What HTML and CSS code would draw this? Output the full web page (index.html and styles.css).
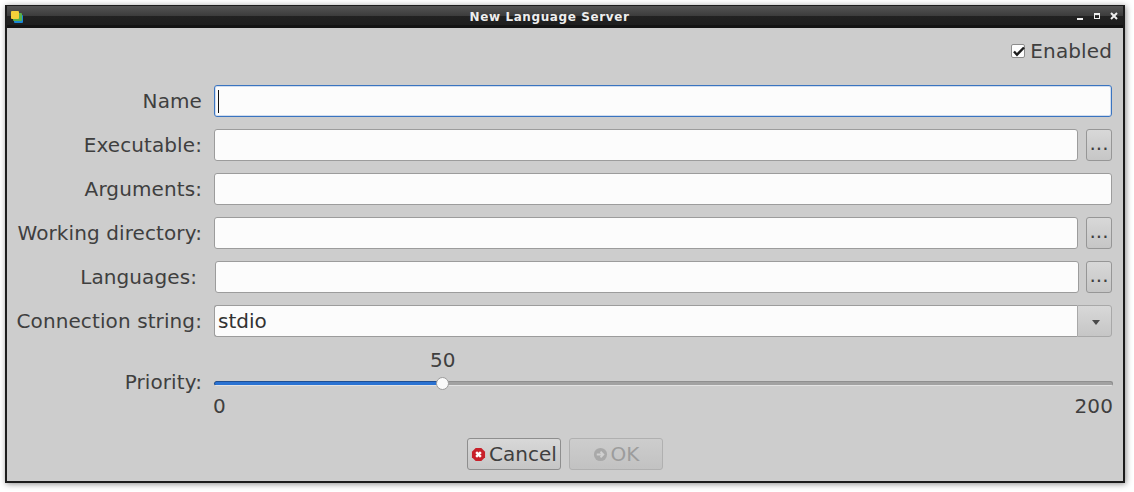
FILE: index.html
```html
<!DOCTYPE html>
<html lang="en">
<head>
<meta charset="utf-8">
<title>New Language Server</title>
<link rel="stylesheet" href="styles.css">
</head>
<body>
<div class="window">
  <header class="titlebar">
    <div class="title-left">
      <svg class="app-icon" width="13" height="13" viewBox="0 0 13 13">
        <rect x="3" y="4" width="9" height="8" rx="1" fill="#1b87d6"/>
        <rect x="2" y="2" width="9" height="8" rx="1" fill="#58b04a"/>
        <rect x="0" y="0" width="8" height="8" rx="1" fill="#f5cf3a"/>
      </svg>
    </div>
    <div class="title-text">New Language Server</div>
    <div class="title-controls">
      <svg width="8" height="8" viewBox="0 0 8 8"><rect x="1" y="6" width="6" height="2" fill="#eee"/></svg>
      <svg width="8" height="8" viewBox="0 0 8 8"><path d="M1 1h6v6H1z M2 3v3h4V3z" fill="#eee" fill-rule="evenodd"/></svg>
      <svg width="8" height="8" viewBox="0 0 8 8"><path d="M1 1l6 6M7 1L1 7" stroke="#eee" stroke-width="2"/></svg>
    </div>
  </header>
  <main class="content">
    <div class="enabled-row">
      <span class="checkbox">
        <svg width="15" height="15" viewBox="0 0 15 15"><path d="M3 7.5l3 3.2L13 3.5" fill="none" stroke="#1c1c1c" stroke-width="2.4"/></svg>
      </span>
      <span class="enabled-text">Enabled</span>
    </div>
    <div class="form">
      <label class="label">Name</label>
      <div class="field-row"><div class="input focused"><span class="caret"></span></div></div>

      <label class="label">Executable:</label>
      <div class="field-row"><div class="input"></div><button class="browse">...</button></div>

      <label class="label">Arguments:</label>
      <div class="field-row"><div class="input"></div></div>

      <label class="label">Working directory:</label>
      <div class="field-row"><div class="input"></div><button class="browse">...</button></div>

      <label class="label lang-label">Languages:</label>
      <div class="field-row lang-row"><div class="input"></div><button class="browse">...</button></div>

      <label class="label">Connection string:</label>
      <div class="field-row combo">
        <div class="input combo-input">stdio</div>
        <div class="combo-arrow"><svg width="8" height="5" viewBox="0 0 8 5"><path d="M0 0h8L4 5z" fill="#4a4a4a"/></svg></div>
      </div>

      <label class="label priority-label">Priority:</label>
      <div class="slider">
        <div class="slider-value">50</div>
        <div class="track"><div class="fill"></div><div class="thumb"></div></div>
        <div class="slider-ends"><span>0</span><span>200</span></div>
      </div>
    </div>
    <div class="buttons">
      <button class="btn">
        <svg width="15" height="15" viewBox="0 0 16 16">
          <path d="M5 1h6l4 4v6l-4 4H5l-4-4V5z" fill="#c8202a"/>
          <path d="M5.5 5.5l5 5M10.5 5.5l-5 5" stroke="#fff" stroke-width="2.6"/>
        </svg>
        <span>Cancel</span>
      </button>
      <button class="btn disabled">
        <svg width="15" height="15" viewBox="0 0 16 16">
          <circle cx="8" cy="8" r="7" fill="#a9a9a9"/>
          <path d="M4 8h7M8 5l3 3-3 3" fill="none" stroke="#d0d0d0" stroke-width="2"/>
        </svg>
        <span>OK</span>
      </button>
    </div>
  </main>
</div>
</body>
</html>
```
FILE: styles.css
```css
* { box-sizing: border-box; }
html, body { margin: 0; padding: 0; }
body {
  width: 1134px;
  height: 492px;
  background: #fff;
  overflow: hidden;
  padding: 5px 9px 9px 5px;
  font-family: "DejaVu Sans", sans-serif;
}
.window {
  height: 478px;
  display: flex;
  flex-direction: column;
  border: 2px solid #1c1c1c;
  border-top-width: 1px;
  background: #cdcdcd;
  box-shadow: 1px 1px 6px rgba(0, 0, 0, .45);
  color: #3f3f3f;
  font-size: 20px;
}
.titlebar {
  height: 22px;
  flex: none;
  display: grid;
  grid-template-columns: 1fr auto 1fr;
  align-items: center;
  padding: 0 4px;
  background: linear-gradient(#545454 0, #3c3c3c 10px, #222 10px, #1e1e1e 19px, #141414 19px);
  color: #eee;
  font-size: 12px;
  font-weight: bold;
}
.title-left { display: flex; }
.title-text { letter-spacing: .6px; margin-right: 31px; }
.title-controls {
  display: flex;
  justify-content: flex-end;
  gap: 9px;
  padding: 0 1px 2px 0;
}
.content {
  flex: 1;
  display: flex;
  flex-direction: column;
  padding: 10px 11px 0 10px;
}
.enabled-row {
  display: flex;
  justify-content: flex-end;
  align-items: center;
  gap: 5px;
  height: 26px;
}
.enabled-text { letter-spacing: .12px; }
.checkbox {
  width: 14px;
  height: 14px;
  display: flex;
  background: #fdfdfd;
  border: 1px solid #8c8c8c;
  border-radius: 2px;
}
.checkbox svg { margin: -1px; flex: none; }
.form {
  display: grid;
  grid-template-columns: 185px minmax(0, 1fr);
  column-gap: 12px;
  row-gap: 12px;
  margin-top: 21px;
}
.label {
  display: flex;
  align-items: center;
  justify-content: flex-end;
  white-space: nowrap;
  letter-spacing: .1px;
}
.lang-label { padding-right: 5px; }
.field-row {
  display: flex;
  gap: 8px;
  height: 32px;
}
.lang-row { padding-left: 1px; gap: 7px; }
.input {
  flex: 1;
  height: 32px;
  background: #fcfcfc;
  border: 1px solid #9c9c9c;
  border-radius: 3px;
  display: flex;
  align-items: center;
  padding-left: 3px;
}
.input.focused {
  border-color: #3a74c0;
  box-shadow: inset 0 0 0 1px rgba(58, 116, 192, .22);
}
.caret { width: 1px; height: 23px; background: #111; }
.browse {
  width: 26px;
  height: 32px;
  padding: 0 0 4px;
  background: linear-gradient(#d8d8d8, #c6c6c6);
  border: 1px solid #969696;
  border-radius: 3px;
  color: #3f3f3f;
  font: 20px "DejaVu Sans", sans-serif;
  line-height: 1;
}
.combo { gap: 0; }
.combo-input { border-right: 0; border-radius: 3px 0 0 3px; color: #333; }
.combo-arrow {
  width: 35px;
  height: 32px;
  display: flex;
  align-items: center;
  justify-content: center;
  padding: 3px 0 0 3px;
  background: linear-gradient(#d8d8d8, #c6c6c6);
  border: 1px solid #a8a8a8;
  border-radius: 0 3px 3px 0;
}
.priority-label { align-self: start; margin-top: 19px; height: 28px; }
.slider { height: 89px; padding-top: 1px; }
.slider-value { margin-left: 216px; height: 21px; line-height: 21px; }
.track {
  position: relative;
  height: 5px;
  margin: 10px -1px 0 0;
  background: #a2a2a2;
  border: 1px solid #8f8f8f;
  border-bottom-color: #e2e2e2;
  border-radius: 3px;
}
.fill {
  width: 228px;
  height: 100%;
  background: #2a72d2;
  box-shadow: 0 -1px 0 #1f4f94, -1px 0 0 #1f4f94;
  border-radius: 2px;
}
.thumb {
  position: absolute;
  left: 221px;
  top: -5px;
  width: 13px;
  height: 13px;
  border-radius: 50%;
  background: #fafafa;
  border: 1px solid #9c9c9c;
}
.slider-ends {
  display: flex;
  justify-content: space-between;
  margin: 7px -1px 0 -1px;
  line-height: 26px;
  letter-spacing: .1px;
}
.buttons {
  display: flex;
  justify-content: center;
  gap: 8px;
  padding-left: 1px;
}
.btn {
  width: 94px;
  height: 32px;
  display: flex;
  align-items: center;
  justify-content: center;
  gap: 3px;
  padding: 0;
  background: linear-gradient(#d8d8d8, #c6c6c6);
  border: 1px solid #8e8e8e;
  border-radius: 3px;
  color: #3f3f3f;
  font: 20px "DejaVu Sans", sans-serif;
}
.btn.disabled {
  color: #9c9c9c;
  border-color: #b0b0b0;
  background: linear-gradient(#cdcdcd, #c2c2c2);
}
```
